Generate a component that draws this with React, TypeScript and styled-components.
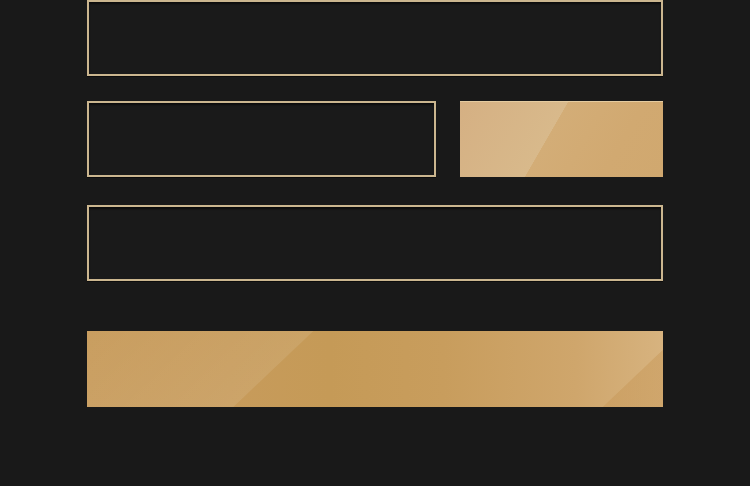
import React from "react";
import styled, { createGlobalStyle } from "styled-components";

const Global = createGlobalStyle`
  html, body { margin: 0; padding: 0; background: #191919; }
  body { font-family: "Liberation Sans", Arial, sans-serif; }
`;

const Page = styled.div`
  width: 750px;
  height: 486px;
  background: #191919;
  overflow: hidden;
`;

const Form = styled.form`
  width: 576px;
  margin-left: 87px;
  display: flex;
  flex-direction: column;
`;

const Field = styled.input<{ $gap?: number }>`
  box-sizing: border-box;
  display: block;
  width: 100%;
  height: 76px;
  margin: 0;
  margin-top: ${(p) => p.$gap ?? 0}px;
  padding: 0 16px;
  background: #1a1a1a;
  border: 2px solid #cbb68f;
  border-radius: 0;
  box-shadow: inset 0 2px 2px rgba(0, 0, 0, 0.55), 0 1px 0 #0c0c0c;
  color: #e0d2b6;
  font-size: 16px;
  outline: none;
`;

const Row = styled.div`
  display: flex;
  gap: 24px;
  margin-top: 25px;
`;

const HalfField = styled(Field)`
  width: 349px;
  flex: none;
`;

const SmallButton = styled.button`
  flex: 1;
  height: 76px;
  border: none;
  border-top: 1px solid #e4cba0;
  padding: 0;
  background: linear-gradient(120deg, #d5b083 0%, #d8b98b 43.8%, #d3ad77 44%, #d1a971 75%, #d0a86f 100%);
  cursor: pointer;
`;

const BigButton = styled.button`
  margin-top: 50px;
  width: 100%;
  height: 76px;
  border: none;
  padding: 0;
  background:
    linear-gradient(136.5deg, rgba(255, 255, 255, 0) 0%, rgba(255, 255, 255, 0.09) 34.4%, rgba(255, 255, 255, 0) 34.6%),
    linear-gradient(136.5deg, rgba(198, 150, 85, 0) 90.7%, rgba(198, 150, 85, 0.45) 90.9%),
    linear-gradient(90deg, #c99e60 0%, #c79b5b 25%, #c59a57 42%, #c89d5d 62%, #cfa66c 85%, #d7b37f 100%);
  cursor: pointer;
`;

export default function App() {
  return (
    <>
      <Global />
      <Page>
        <Form onSubmit={(e) => e.preventDefault()}>
          <Field type="text" aria-label="Name" />
          <Row>
            <HalfField type="text" aria-label="Code" />
            <SmallButton type="button" aria-label="Apply" />
          </Row>
          <Field type="text" aria-label="Email" $gap={28} />
          <BigButton type="submit" aria-label="Submit" />
        </Form>
      </Page>
    </>
  );
}
